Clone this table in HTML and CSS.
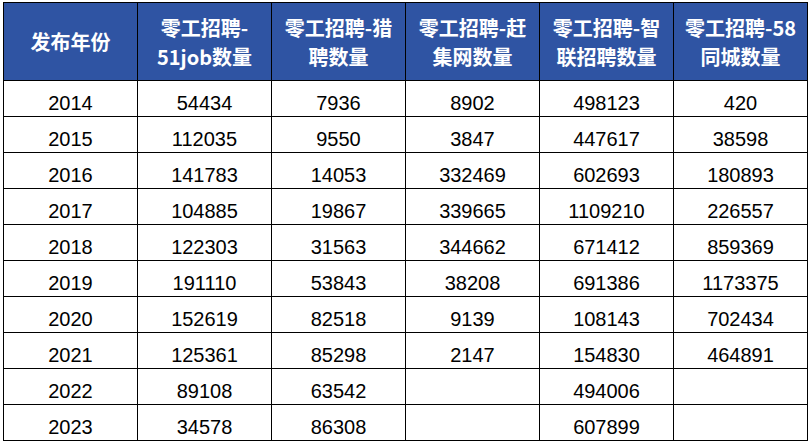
FILE: index.html
```html
<!DOCTYPE html>
<html lang="zh">
<head>
<meta charset="utf-8">
<link rel="stylesheet" href="styles.css">
</head>
<body>
<table class="sheet">
  <colgroup>
    <col class="c"><col class="c"><col class="c"><col class="c"><col class="c"><col class="c">
  </colgroup>
  <thead>
    <tr>
      <th>发布年份</th>
      <th>零工招聘-<br>51job数量</th>
      <th>零工招聘-猎<br>聘数量</th>
      <th>零工招聘-赶<br>集网数量</th>
      <th>零工招聘-智<br>联招聘数量</th>
      <th>零工招聘-58<br>同城数量</th>
    </tr>
  </thead>
  <tbody>
    <tr><td>2014</td><td>54434</td><td>7936</td><td>8902</td><td>498123</td><td>420</td></tr>
    <tr><td>2015</td><td>112035</td><td>9550</td><td>3847</td><td>447617</td><td>38598</td></tr>
    <tr><td>2016</td><td>141783</td><td>14053</td><td>332469</td><td>602693</td><td>180893</td></tr>
    <tr><td>2017</td><td>104885</td><td>19867</td><td>339665</td><td>1109210</td><td>226557</td></tr>
    <tr><td>2018</td><td>122303</td><td>31563</td><td>344662</td><td>671412</td><td>859369</td></tr>
    <tr><td>2019</td><td>191110</td><td>53843</td><td>38208</td><td>691386</td><td>1173375</td></tr>
    <tr><td>2020</td><td>152619</td><td>82518</td><td>9139</td><td>108143</td><td>702434</td></tr>
    <tr><td>2021</td><td>125361</td><td>85298</td><td>2147</td><td>154830</td><td>464891</td></tr>
    <tr><td>2022</td><td>89108</td><td>63542</td><td></td><td>494006</td><td></td></tr>
    <tr><td>2023</td><td>34578</td><td>86308</td><td></td><td>607899</td><td></td></tr>
  </tbody>
</table>
</body>
</html>
```
FILE: styles.css
```css
html, body {
  margin: 0;
  padding: 0;
  background: #ffffff;
}
body {
  padding: 2px 0 0 3px;
}
.sheet {
  border-collapse: collapse;
  table-layout: fixed;
  width: 804px;
}
.sheet .c {
  width: 134px;
}
.sheet th {
  background: #2f54a3;
  color: #ffffff;
  font-family: "Noto Sans CJK SC", "Noto Sans", sans-serif;
  font-weight: 700;
  font-size: 20px;
  line-height: 29px;
  height: 77px;
  padding: 0;
  text-align: center;
  vertical-align: middle;
  border: 1px solid #000000;
}
.sheet td {
  font-family: "Liberation Sans", Arial, sans-serif;
  font-size: 20px;
  line-height: 22px;
  color: #000000;
  height: 33px;
  padding: 0 0 2px 0;
  text-align: center;
  vertical-align: bottom;
  border: 1px solid #000000;
}
```
